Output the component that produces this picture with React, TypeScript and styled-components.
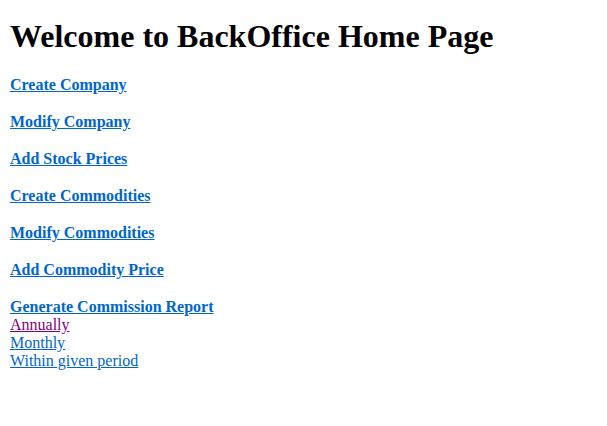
import React from "react";
import styled, { createGlobalStyle } from "styled-components";

const Global = createGlobalStyle`
  html, body { margin: 0; padding: 0; background: #ffffff; }
  body { font-family: "Liberation Serif", "Times New Roman", serif; color: #000; }
`;

const Page = styled.div`
  padding: 8px 10px;
  display: flex;
  flex-direction: column;
`;

const Title = styled.h1`
  margin: 10px 0 3px;
  font-size: 32px;
  font-weight: bold;
  line-height: 36px;
`;

const Section = styled.h4`
  margin: 19px 0 0;
  font-size: 16px;
  font-weight: bold;
  line-height: 18px;
`;

const Link = styled.a<{ $visited?: boolean }>`
  color: ${(p) => (p.$visited ? "#800080" : "#0066cc")};
  text-decoration: underline;
`;

const SubList = styled.div`
  display: flex;
  flex-direction: column;
  font-size: 16px;
  line-height: 18px;
`;

const items = [
  "Create Company",
  "Modify Company",
  "Add Stock Prices",
  "Create Commodities",
  "Modify Commodities",
  "Add Commodity Price",
];

export default function App() {
  return (
    <>
      <Global />
      <Page>
        <Title>Welcome to BackOffice Home Page</Title>
        {items.map((t) => (
          <Section key={t}>
            <Link href="#">{t}</Link>
          </Section>
        ))}
        <Section>
          <Link href="#">Generate Commission Report</Link>
        </Section>
        <SubList>
          <div><Link href="#" $visited>Annually</Link></div>
          <div><Link href="#">Monthly</Link></div>
          <div><Link href="#">Within given period</Link></div>
        </SubList>
      </Page>
    </>
  );
}
